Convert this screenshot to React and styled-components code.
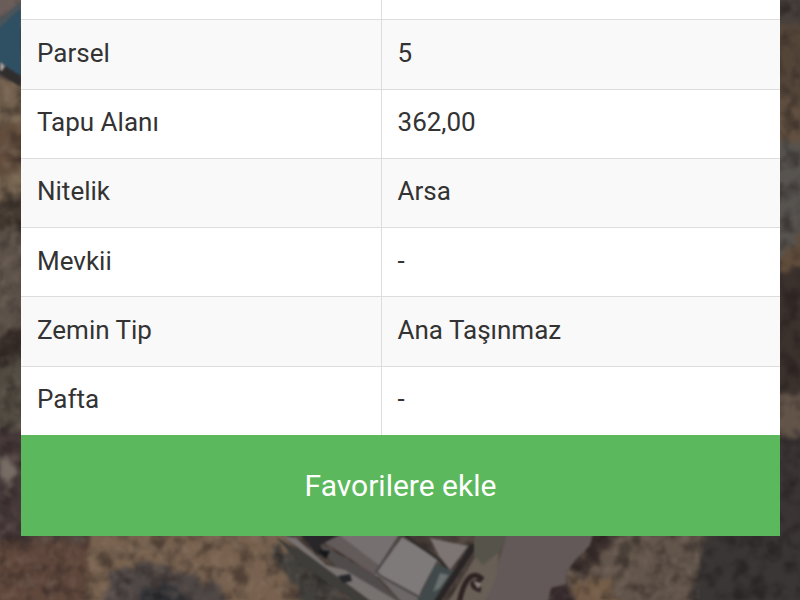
import React from "react";
import styled, { createGlobalStyle } from "styled-components";

const GlobalStyle = createGlobalStyle`
  body {
    margin: 0;
    background: #4d433d;
    font-family: Roboto, "Liberation Sans", sans-serif;
  }
`;

const Screen = styled.main`
  position: relative;
  display: flex;
  flex-direction: column;
  justify-content: flex-end;
  height: 100vh;
  box-sizing: border-box;
  padding: 0 20px 64px 21px;
  overflow: hidden;
`;

const MapImage = styled.svg`
  position: absolute;
  inset: 0;
  width: 100%;
  height: 100%;
`;

const Panel = styled.section`
  position: relative;
  background: #fff;
`;

const Table = styled.table`
  width: 100%;
  height: 485px;
  table-layout: fixed;
  border-spacing: 0;
  color: #333;
  font-size: 26px;
  line-height: 32px;
`;

const Row = styled.tr`
  height: 69px;
  background: ${({ $striped }) => ($striped ? "#f9f9f9" : "#fff")};
`;

const Label = styled.th`
  box-sizing: border-box;
  width: 47.5%;
  padding: 0 0 3px 16px;
  border-top: 1px solid #ddd;
  border-right: 1px solid #ddd;
  font-weight: 400;
  text-align: left;
`;

const Value = styled.td`
  padding: 0 0 3px 16px;
  border-top: 1px solid #ddd;
`;

const FavoriteButton = styled.button`
  display: block;
  width: 100%;
  padding: 31px 16px;
  border: 0;
  background: #5cb85c;
  color: #fff;
  font-family: inherit;
  font-size: 30px;
  line-height: 39px;
  cursor: pointer;
`;

const rows = [
  ["", ""],
  ["Parsel", "5"],
  ["Tapu Alanı", "362,00"],
  ["Nitelik", "Arsa"],
  ["Mevkii", "-"],
  ["Zemin Tip", "Ana Taşınmaz"],
  ["Pafta", "-"],
];

const AerialMap = () => (
  <MapImage viewBox="0 0 800 600" preserveAspectRatio="none" aria-hidden="true">
    <defs>
      <filter id="soft" x="-5%" y="-5%" width="110%" height="110%" colorInterpolationFilters="sRGB">
        <feTurbulence type="fractalNoise" baseFrequency="0.1" numOctaves="3" seed="4" result="noise" />
        <feDisplacementMap in="SourceGraphic" in2="noise" scale="20" xChannelSelector="R" yChannelSelector="G" />
        <feGaussianBlur stdDeviation="2" />
      </filter>
      <filter id="edge" colorInterpolationFilters="sRGB">
        <feGaussianBlur stdDeviation="0.9" />
      </filter>
      <filter id="grain" x="0" y="0" width="100%" height="100%" colorInterpolationFilters="sRGB">
        <feTurbulence type="fractalNoise" baseFrequency="0.06" numOctaves="4" seed="9" />
        <feColorMatrix values="0 0 0 0 0.08  0 0 0 0 0.06  0 0 0 0 0.06  3 0 0 0 -1.3" />
        <feGaussianBlur stdDeviation="1" />
      </filter>
      <filter id="specks" x="0" y="0" width="100%" height="100%" colorInterpolationFilters="sRGB">
        <feTurbulence type="fractalNoise" baseFrequency="0.09" numOctaves="3" seed="21" />
        <feColorMatrix values="0 0 0 0 0.64  0 0 0 0 0.56  0 0 0 0 0.5  0 3 0 0 -1.4" />
        <feGaussianBlur stdDeviation="1" />
      </filter>
    </defs>

    <rect width="800" height="600" fill="#4a403b" />

    <g filter="url(#soft)">
      {/* left edge */}
      <path d="M-10 -10H30V20L-10 32Z" fill="#6a5d59" />
      <path d="M-10 72L30 90V205H-10Z" fill="#75634f" />
      <path d="M-10 125H30V165L-10 180Z" fill="#624d3d" />
      <path d="M-10 205L30 190V240H-10Z" fill="#443a31" />
      <path d="M-10 232L30 228V345H-10Z" fill="#5c5149" />
      <path d="M-10 345L30 318V370L-10 385Z" fill="#352b27" />
      <path d="M-10 370L30 350V430H-10Z" fill="#514b42" />
      <path d="M-10 430H30V550H-10Z" fill="#47393a" />
      <path d="M-2 455L12 460L16 476L4 490Z" fill="#776d65" />

      {/* right edge */}
      <path d="M770 -10H810V30H770Z" fill="#463f3b" />
      <path d="M770 25H810V150H770Z" fill="#544539" />
      <path d="M770 90L810 105V155H770Z" fill="#625142" />
      <path d="M770 230L810 225V265L770 300Z" fill="#604d3c" />
      <path d="M770 143H810V225L770 265Z" fill="#57534f" />
      <path d="M770 280L810 260V395H770Z" fill="#3b312d" />
      <path d="M770 393H810V430L770 445Z" fill="#625449" />
      <path d="M770 442L810 430V610H770Z" fill="#3a3434" />

      {/* ground along the bottom */}
      <path d="M-10 540H120V620H-10Z" fill="#5f473c" />
      <path d="M90 525H280L330 620H85Z" fill="#78624f" />
      <path d="M110 575L135 560L175 568L225 590L232 620H100Z" fill="#504846" />
      <path d="M140 590L165 580L192 600V620H138Z" fill="#2f3034" />
      <path d="M270 545L300 556L370 620H310Z" fill="#42403c" />
      <path d="M595 530H700V620H548L566 570Z" fill="#62554b" />
      <path d="M570 582L610 575L625 620H560Z" fill="#755e49" />
      <path d="M595 530H622L602 558L588 575L570 574Z" fill="#3c302d" />
      <path d="M550 585L568 585L585 620H545Z" fill="#35292c" />
      <path d="M705 530H810V620H690Z" fill="#3a3635" />
    </g>

    <rect width="800" height="600" filter="url(#grain)" opacity="0.4" />
    <rect width="700" height="600" filter="url(#specks)" opacity="0.2" />

    <g filter="url(#edge)">
      {/* blue roof */}
      <path d="M-5 24L21 8V82L-5 63Z" fill="#2f4f62" />
      <path d="M-5 23L21 1V8L-5 32Z" fill="#49545a" />
      <path d="M-5 60L21 76V87L-5 71Z" fill="#302d2d" />
      <path d="M0 62L5 66L2 71L0 70Z" fill="#aaa3a0" />

      {/* road */}
      <path d="M508 530H594L590 545L576 559L566 572L566 584L551 588L547 605H485Z" fill="#635958" />

      {/* houses */}
      <path d="M312 534H400L376 576Z" fill="#635b5a" />
      <path d="M338 534H400L380 566Z" fill="#777070" />
      <path d="M316 541L376 576L402 605H365Z" fill="#514c4c" />
      <path d="M276 537L330 568L390 605H360L298 562Z" fill="#3e3d3a" />
      <path d="M282 536L296 538L326 565L345 570L404 605H376Z" fill="#777170" />
      <path d="M300 532H345L320 545L326 557L316 554Z" fill="#282629" />
      <path d="M318 550L330 551L326 559Z" fill="#151719" />
      <path d="M338 576L350 574L352 581L343 583Z" fill="#252629" />
      <path d="M376 573L404 605H432L418 592Z" fill="#6d6767" />
      <path d="M402 537L438 559L418 597L375 575Z" fill="#7f7a7a" />
      <path d="M400 535L376 572L382 577L430 603" fill="none" stroke="#494545" strokeWidth="2" />
      <path d="M405 535L440 560L448 570" fill="none" stroke="#2f2c2b" strokeWidth="3" />
      <path d="M430 538L468 546L450 570L439 556Z" fill="#7c7573" />
      <path d="M436 563L454 572L438 605H415Z" fill="#42494a" />
      <path d="M440 573L449 575L440 588L433 592Z" fill="#69706f" />
      <path d="M478 552L500 546L496 578L484 605H446L464 576Z" fill="#685f57" />
      <path d="M474 545L435 605" fill="none" stroke="#292526" strokeWidth="6" />
      <path d="M474 532H508L500 552L483 565L474 556Z" fill="#56544a" />
      <path d="M459 604C464 576 474 571 481 578L477 583C471 580 471 588 481 590" fill="none" stroke="#2e2222" strokeWidth="5" />
      <path d="M473 581L481 583L478 589Z" fill="#8b817d" />
    </g>
  </MapImage>
);

const App = () => {
  return (
    <>
      <GlobalStyle />
      <Screen>
        <AerialMap />
        <Panel>
          <Table>
            <tbody>
              {rows.map(([label, value], index) => (
                <Row key={index} $striped={index % 2 === 1}>
                  <Label scope="row">{label}</Label>
                  <Value>{value}</Value>
                </Row>
              ))}
            </tbody>
          </Table>
          <FavoriteButton type="button">Favorilere ekle</FavoriteButton>
        </Panel>
      </Screen>
    </>
  );
};

export default App;
